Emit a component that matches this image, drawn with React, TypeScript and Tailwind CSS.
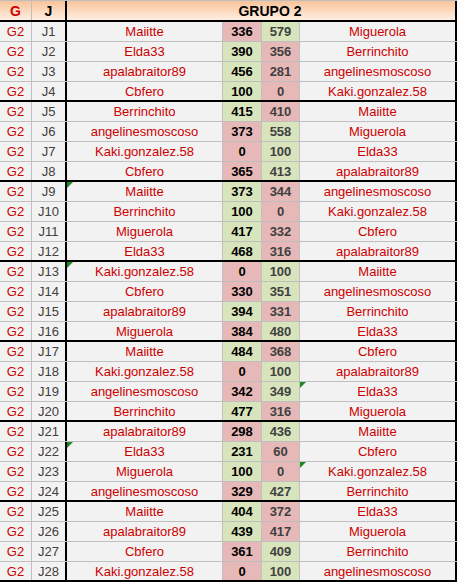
import React from 'react'

type Match = { j: number; a: string; sa: number; sb: number; b: string; noteA?: boolean; noteB?: boolean }

const matches: Match[] = [
  { j: 1, a: 'Maiitte', sa: 336, sb: 579, b: 'Miguerola' },
  { j: 2, a: 'Elda33', sa: 390, sb: 356, b: 'Berrinchito' },
  { j: 3, a: 'apalabraitor89', sa: 456, sb: 281, b: 'angelinesmoscoso' },
  { j: 4, a: 'Cbfero', sa: 100, sb: 0, b: 'Kaki.gonzalez.58' },
  { j: 5, a: 'Berrinchito', sa: 415, sb: 410, b: 'Maiitte' },
  { j: 6, a: 'angelinesmoscoso', sa: 373, sb: 558, b: 'Miguerola' },
  { j: 7, a: 'Kaki.gonzalez.58', sa: 0, sb: 100, b: 'Elda33' },
  { j: 8, a: 'Cbfero', sa: 365, sb: 413, b: 'apalabraitor89' },
  { j: 9, a: 'Maiitte', sa: 373, sb: 344, b: 'angelinesmoscoso', noteA: true },
  { j: 10, a: 'Berrinchito', sa: 100, sb: 0, b: 'Kaki.gonzalez.58' },
  { j: 11, a: 'Miguerola', sa: 417, sb: 332, b: 'Cbfero' },
  { j: 12, a: 'Elda33', sa: 468, sb: 316, b: 'apalabraitor89' },
  { j: 13, a: 'Kaki.gonzalez.58', sa: 0, sb: 100, b: 'Maiitte', noteA: true },
  { j: 14, a: 'Cbfero', sa: 330, sb: 351, b: 'angelinesmoscoso' },
  { j: 15, a: 'apalabraitor89', sa: 394, sb: 331, b: 'Berrinchito' },
  { j: 16, a: 'Miguerola', sa: 384, sb: 480, b: 'Elda33' },
  { j: 17, a: 'Maiitte', sa: 484, sb: 368, b: 'Cbfero' },
  { j: 18, a: 'Kaki.gonzalez.58', sa: 0, sb: 100, b: 'apalabraitor89' },
  { j: 19, a: 'angelinesmoscoso', sa: 342, sb: 349, b: 'Elda33', noteB: true },
  { j: 20, a: 'Berrinchito', sa: 477, sb: 316, b: 'Miguerola' },
  { j: 21, a: 'apalabraitor89', sa: 298, sb: 436, b: 'Maiitte' },
  { j: 22, a: 'Elda33', sa: 231, sb: 60, b: 'Cbfero', noteA: true },
  { j: 23, a: 'Miguerola', sa: 100, sb: 0, b: 'Kaki.gonzalez.58', noteB: true },
  { j: 24, a: 'angelinesmoscoso', sa: 329, sb: 427, b: 'Berrinchito' },
  { j: 25, a: 'Maiitte', sa: 404, sb: 372, b: 'Elda33' },
  { j: 26, a: 'apalabraitor89', sa: 439, sb: 417, b: 'Miguerola' },
  { j: 27, a: 'Cbfero', sa: 361, sb: 409, b: 'Berrinchito' },
  { j: 28, a: 'Kaki.gonzalez.58', sa: 0, sb: 100, b: 'angelinesmoscoso' },
]

const PINK = 'bg-[#e6b9b8]'
const GREEN = 'bg-[#d8e4bc]'

// little green comment marker, excel style
function Note() {
  return (
    <span className="absolute left-0 top-0 h-0 w-0 border-t-[6px] border-r-[6px] border-t-[#1f8a1f] border-r-transparent" />
  )
}

function Row({ m, last }: { m: Match; last: boolean }) {
  const aWins = m.sa > m.sb
  const bottom = last ? 'border-b-2 border-b-black' : 'border-b border-b-[#bfbfbf]'
  return (
    <div className={`flex h-[20px] bg-[#f2f2f2] ${bottom}`}>
      <div className="flex w-[32px] items-center justify-center border-r border-r-[#bfbfbf] text-[#d00000]">G2</div>
      <div className="flex w-[35px] items-center justify-center border-r-2 border-r-black text-[#404040]">J{m.j}</div>
      <div className="relative flex w-[156px] items-center justify-center border-r border-r-[#bfbfbf] text-[#cc0000]">
        {m.noteA && <Note />}
        {m.a}
      </div>
      <div className={`flex w-[39px] items-center justify-center border-r border-r-[#bfbfbf] font-bold text-black ${aWins ? GREEN : PINK}`}>
        {m.sa}
      </div>
      <div className={`flex w-[38px] items-center justify-center border-r border-r-[#bfbfbf] font-bold text-[#404040] ${aWins ? PINK : GREEN}`}>
        {m.sb}
      </div>
      <div className="relative flex w-[157px] items-center justify-center border-r-2 border-r-black text-[#cc0000]">
        {m.noteB && <Note />}
        {m.b}
      </div>
    </div>
  )
}

export default function App() {
  return (
    <div className="h-[587px] w-[460px] bg-white text-[13px] leading-none" style={{ fontFamily: '"Liberation Sans", Arial, sans-serif' }}>
      <div className="w-[457px]">
        {/* header */}
        <div className="flex h-[22px] border-t border-t-[#bfbfbf] border-b-2 border-b-black bg-gradient-to-b from-[#f9c49a] to-[#fdeee2] text-[14px]">
          <div className="flex w-[32px] items-center justify-center border-r border-r-[#bfbfbf] font-bold text-[#d00000]">G</div>
          <div className="flex w-[35px] items-center justify-center border-r-2 border-r-black font-bold text-black">J</div>
          <div className="relative flex flex-1 items-center justify-center border-r-2 border-r-black pl-[18px] font-bold text-black">
            GRUPO 2
          </div>
        </div>
        {matches.map((m, i) => (
          <Row key={m.j} m={m} last={i % 4 === 3} />
        ))}
      </div>
    </div>
  )
}
